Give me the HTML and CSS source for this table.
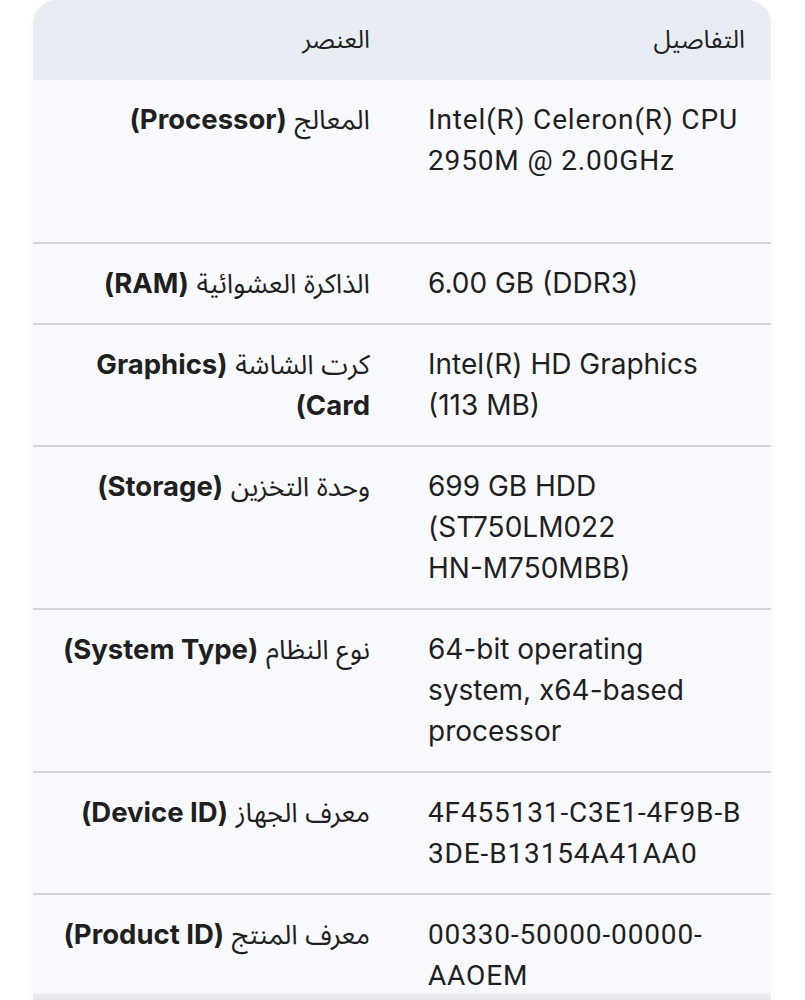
FILE: index.html
```html
<!doctype html>
<html>
  <head>
    <title>مواصفات الجهاز</title>
    <link rel="stylesheet" href="styles.css">
  </head>
  <body>
    <div class="table-wrap">
      <table class="specs">
        <colgroup>
          <col class="col-item">
          <col class="col-details">
        </colgroup>
        <thead>
          <tr>
            <th dir="rtl">العنصر</th>
            <th dir="rtl" class="details">التفاصيل</th>
          </tr>
        </thead>
        <tbody>
          <tr class="row-tall">
            <td dir="rtl">المعالج <strong>(Processor)</strong></td>
            <td class="details narrow">Intel(R) Celeron(R) CPU 2950M @ 2.00GHz</td>
          </tr>
          <tr>
            <td dir="rtl">الذاكرة العشوائية <strong>(RAM)</strong></td>
            <td class="details">6.00 GB (DDR3)</td>
          </tr>
          <tr>
            <td dir="rtl">كرت الشاشة <strong>(Graphics Card)</strong></td>
            <td class="details">Intel(R) HD Graphics (113 MB)</td>
          </tr>
          <tr>
            <td dir="rtl">وحدة التخزين <strong>(Storage)</strong></td>
            <td class="details">699 GB HDD (ST750LM022 <span class="nowrap">HN-M750MBB)</span></td>
          </tr>
          <tr>
            <td dir="rtl">نوع النظام <strong>(System Type)</strong></td>
            <td class="details">64-bit operating system, x64-based processor</td>
          </tr>
          <tr>
            <td dir="rtl">معرف الجهاز <strong>(Device ID)</strong></td>
            <td class="details narrow break-all">4F455131-C3E1-4F9B-B3DE-B13154A41AA0</td>
          </tr>
          <tr>
            <td dir="rtl">معرف المنتج <strong>(Product ID)</strong></td>
            <td class="details narrow">00330-50000-00000-AAOEM</td>
          </tr>
        </tbody>
      </table>
    </div>
    <div class="bottom-bar"></div>
  </body>
</html>
```

FILE: styles.css
```css
body {
  margin: 0;
  padding: 0;
  background-color: #fff;
  font-family: Inter, "Noto Sans Arabic", "DejaVu Sans", sans-serif;
  color: #1f1f1f;
}
.table-wrap {
  width: 738px;
  margin-left: 33px;
  border-radius: 24px 24px 0 0;
  overflow: hidden;
  box-shadow: 0 0 6px rgba(0, 0, 0, 0.04);
}
.specs {
  width: 100%;
  table-layout: fixed;
  border-collapse: collapse;
  background-color: #f8f9fc;
  font-size: 27px;
  line-height: 41px;
}
.col-item {
  width: 365px;
}
.col-details {
  width: 373px;
}
.specs th {
  background-color: #e8ecf3;
  font-weight: normal;
  font-size: 25px;
  text-align: start;
  padding: 19px 28px 20px 12px;
}
.specs td {
  vertical-align: top;
  padding: 19px 28px 19px 12px;
  overflow-wrap: break-word;
}
.specs tbody tr + tr td {
  border-top: 2px solid #d3d5da;
}
.specs .details {
  font-size: 28px;
  padding-left: 30px;
  padding-right: 26px;
}
.specs th.details {
  font-size: 25px;
  text-align: right;
}
.specs td strong {
  font-size: 27.5px;
  font-weight: 700;
}
.narrow {
  font-family: Roboto, "DejaVu Sans", sans-serif;
  letter-spacing: 0.85px;
}
.break-all {
  word-break: break-all;
}
.nowrap {
  white-space: nowrap;
}
.row-tall td {
  padding-bottom: 61px;
}
.bottom-bar {
  position: fixed;
  left: 33px;
  bottom: 0;
  width: 738px;
  height: 7px;
  background: linear-gradient(#eef0f3, #e4e6ea);
}
```
